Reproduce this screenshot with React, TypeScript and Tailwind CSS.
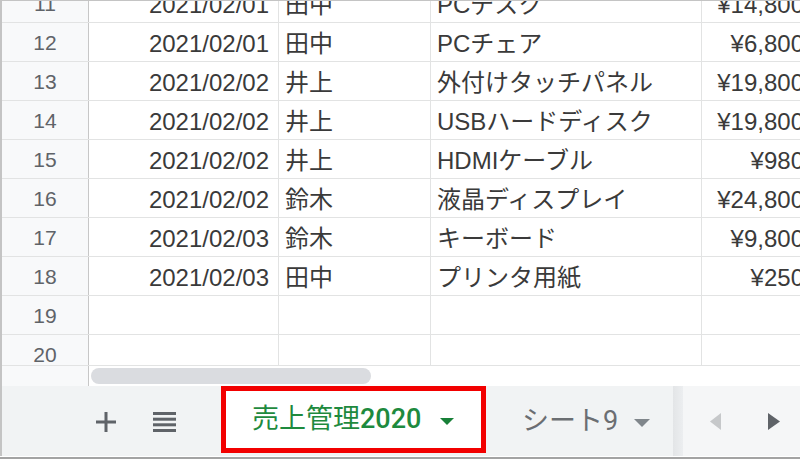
const ROWS: [string, string, string, string, string][] = [
  ["11", "2021/02/01", "田中", "PCデスク", "¥14,800"],
  ["12", "2021/02/01", "田中", "PCチェア", "¥6,800"],
  ["13", "2021/02/02", "井上", "外付けタッチパネル", "¥19,800"],
  ["14", "2021/02/02", "井上", "USBハードディスク", "¥19,800"],
  ["15", "2021/02/02", "井上", "HDMIケーブル", "¥980"],
  ["16", "2021/02/02", "鈴木", "液晶ディスプレイ", "¥24,800"],
  ["17", "2021/02/03", "鈴木", "キーボード", "¥9,800"],
  ["18", "2021/02/03", "田中", "プリンタ用紙", "¥250"],
  ["19", "", "", "", ""],
  ["20", "", "", "", ""],
];

function PlusIcon() {
  return (
    <svg width="20" height="20" viewBox="0 0 20 20" fill="#5f6368">
      <rect x="8.5" y="0" width="3" height="20" />
      <rect x="0" y="8.5" width="20" height="3" />
    </svg>
  );
}

function ListIcon() {
  return (
    <svg width="23" height="20" viewBox="0 0 23 20" fill="#5f6368">
      <rect x="0" y="0" width="23" height="3" />
      <rect x="0" y="5.7" width="23" height="3" />
      <rect x="0" y="11.3" width="23" height="3" />
      <rect x="0" y="17" width="23" height="3" />
    </svg>
  );
}

function Caret({ color, w, h }: { color: string; w: number; h: number }) {
  return (
    <svg width={w} height={h} viewBox={`0 0 ${w} ${h}`}>
      <polygon points={`0,0 ${w},0 ${w / 2},${h}`} fill={color} />
    </svg>
  );
}

export default function App() {
  return (
    <div className="w-[800px] h-[462px] overflow-hidden bg-white font-['Liberation_Sans','Noto_Sans_CJK_JP',sans-serif]">
      <div className="flex h-[456px] flex-col border-l-2 border-t border-[#c4c4c4]">
        {/* grid rows */}
        <div className="h-[364px] overflow-hidden">
          <div className="mt-[-17px]">
            {ROWS.map((r) => (
              <div key={r[0]} className="flex h-[39px] border-b border-[#e2e3e3] text-[24px] text-[#3a3a3a]">
                <div className="flex w-[87px] shrink-0 items-center justify-center border-r border-[#c7c7c7] bg-[#f8f9fa] pt-[2px] text-[21px] text-[#5f6368]">
                  {r[0]}
                </div>
                <div className="flex w-[190px] shrink-0 items-center justify-end border-r border-[#e2e3e3] pr-[9px] pt-[3px]">
                  {r[1]}
                </div>
                <div className="flex w-[152px] shrink-0 items-center border-r border-[#e2e3e3] pl-[6px] pt-[3px]">
                  {r[2]}
                </div>
                <div className="flex w-[271px] shrink-0 items-center border-r border-[#e2e3e3] pl-[6px] pt-[3px]">
                  {r[3]}
                </div>
                <div className="flex w-[104px] shrink-0 items-center justify-end pr-[2px] pt-[3px]">
                  {r[4]}
                </div>
              </div>
            ))}
          </div>
        </div>

        {/* scrollbar row */}
        <div className="flex h-[21px] border-t border-[#e2e3e3]">
          <div className="w-[87px] shrink-0 border-r border-[#c7c7c7] bg-[#f8f9fa]" />
          <div className="flex-1 pl-[2px] pt-[2px]">
            <div className="h-[16px] w-[280px] rounded-full bg-[#dadce0]" />
          </div>
        </div>

        {/* sheet tabs */}
        <div className="flex h-[70px] bg-[#f1f3f4] font-['Roboto','Noto_Sans_CJK_JP',sans-serif]">
          <div className="flex w-[219px] shrink-0 items-center pl-[94px] pt-[2px]">
            <PlusIcon />
            <div className="ml-[37px]">
              <ListIcon />
            </div>
          </div>
          <div className="flex h-[67px] w-[265px] shrink-0 items-center border-[5px] border-[#f20000] bg-white pl-[26px] text-[27px] text-[#1e8a3e]">
            <span className="font-normal">売上管理</span>
            <span className="font-medium">2020</span>
            <span className="ml-[19px] mt-[3px]">
              <Caret color="#188038" w={14} h={7} />
            </span>
          </div>
          <div className="flex w-[187px] shrink-0 items-center pl-[36px] text-[27px] text-[#6b6e72]">
            <span>シート9</span>
            <span className="ml-[16px] mt-[4px]">
              <Caret color="#80868b" w={16} h={8} />
            </span>
          </div>
          <div className="w-[10px] shrink-0 bg-gradient-to-r from-[#e3e5e7] to-[#eceef0]" />
          <div className="flex flex-1 items-center bg-[#f5f6f7] pl-[27px]">
            <svg width="11" height="17" viewBox="0 0 11 17">
              <polygon points="11,0 11,17 0,8.5" fill="#c6c8ca" />
            </svg>
            <svg className="ml-[47px]" width="12" height="17" viewBox="0 0 12 17">
              <polygon points="0,0 0,17 12,8.5" fill="#5f6368" />
            </svg>
          </div>
        </div>
      </div>
      <div className="h-px bg-white" />
      <div className="h-[2px] bg-[#a3a3a3]" />
    </div>
  );
}
